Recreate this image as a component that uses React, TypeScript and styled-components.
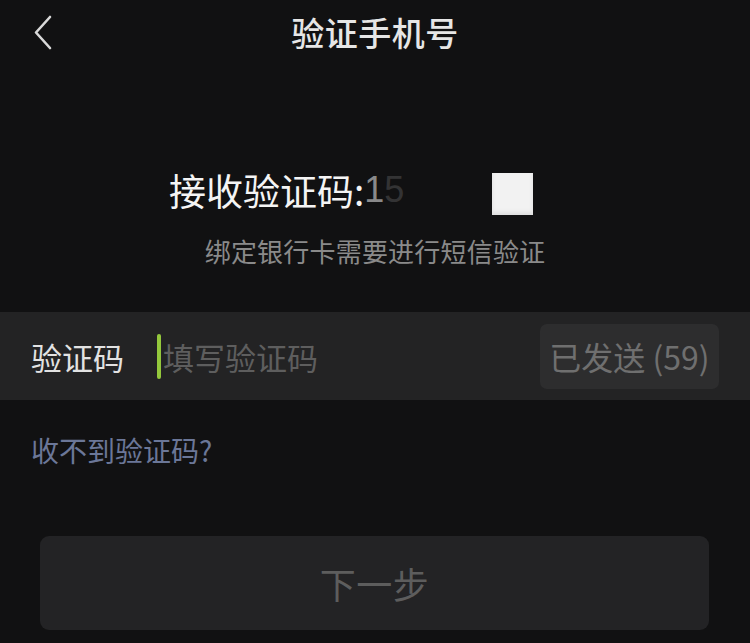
import styled, { createGlobalStyle } from 'styled-components';

const GlobalStyle = createGlobalStyle`
  html, body {
    margin: 0;
    padding: 0;
    background-color: #111112;
  }
  body {
    font-family: "Noto Sans CJK SC", "Noto Sans", "Liberation Sans", sans-serif;
    -webkit-font-smoothing: antialiased;
  }
  * {
    box-sizing: border-box;
  }
`;

const Page = styled.div`
  width: 750px;
  min-height: 643px;
  background-color: #111112;
  display: flex;
  flex-direction: column;
`;

const Header = styled.header`
  height: 64px;
  display: grid;
  grid-template-columns: 1fr auto 1fr;
  align-items: center;
`;

const BackButton = styled.button`
  justify-self: start;
  margin-left: 33px;
  padding: 0;
  border: none;
  background: none;
  display: flex;
  align-items: center;
  cursor: pointer;
`;

const Title = styled.h1`
  margin: 0;
  font-size: 33px;
  font-weight: 500;
  line-height: 64px;
  color: #e6e6e6;
  letter-spacing: 0.5px;
`;

const Info = styled.section`
  margin-top: 102px;
  display: flex;
  flex-direction: column;
`;

const ReceiveLine = styled.div`
  height: 48px;
  display: flex;
  align-items: center;
  padding-left: 169px;
`;

const ReceiveLabel = styled.span`
  font-size: 37px;
  line-height: 48px;
  color: #f4f4f4;
`;

const Phone = styled.span`
  width: 128px;
  font-family: "Liberation Sans", "Noto Sans", sans-serif;
  font-size: 36px;
  line-height: 48px;
  display: flex;
`;

const Digit = styled.span<{ $fade: number }>`
  color: #bdbdbd;
  opacity: ${(p) => p.$fade};
`;

const Redact = styled.span`
  width: 41px;
  height: 42px;
  margin-top: 8px;
  background: #f2f2f2;
  box-shadow: inset 0 -3px 4px rgba(0, 0, 0, 0.08);
`;

const Subtitle = styled.p`
  margin: 19px 0 0;
  text-align: center;
  font-size: 26px;
  line-height: 36px;
  color: #8a8a8a;
  letter-spacing: 0.2px;
`;

const CodeRow = styled.div`
  margin-top: 43px;
  height: 88px;
  background-color: #232324;
  display: flex;
  align-items: center;
  padding: 0 31px;
`;

const CodeLabel = styled.span`
  width: 126px;
  font-size: 31px;
  color: #e2e2e2;
`;

const InputWrap = styled.div`
  flex: 1;
  display: flex;
  align-items: center;
  gap: 2px;
`;

const Caret = styled.span`
  width: 4px;
  height: 45px;
  border-radius: 2px;
  background-color: #94c83c;
`;

const CodeInput = styled.input`
  flex: 1;
  min-width: 0;
  border: none;
  outline: none;
  background: transparent;
  font-family: inherit;
  font-size: 31px;
  color: #e2e2e2;
  padding: 0;

  &::placeholder {
    color: #5e5e5e;
  }
`;

const SentButton = styled.button`
  width: 179px;
  height: 65px;
  border: none;
  border-radius: 7px;
  background-color: #2d2d2e;
  color: #6f6f6f;
  font-family: inherit;
  font-size: 32px;
  padding: 0;
  white-space: nowrap;
`;

const HelpLink = styled.a`
  margin: 30px 0 0 31px;
  font-size: 28px;
  line-height: 40px;
  color: #6b7798;
  text-decoration: none;
  align-self: flex-start;
`;

const NextButton = styled.button`
  margin: 66px 41px 0 40px;
  height: 94px;
  border: none;
  border-radius: 9px;
  background-color: #232325;
  color: #5d5d5d;
  font-family: inherit;
  font-size: 36px;
  letter-spacing: 0.5px;
`;

function ChevronLeft() {
  return (
    <svg width="20" height="35" viewBox="0 0 20 35" fill="none">
      <polyline
        points="17,2 3,17.5 17,33"
        stroke="#d9d9d9"
        strokeWidth="2.6"
        strokeLinecap="round"
        strokeLinejoin="round"
      />
    </svg>
  );
}

export default function App() {
  return (
    <>
      <GlobalStyle />
      <Page>
        <Header>
          <BackButton aria-label="返回">
            <ChevronLeft />
          </BackButton>
          <Title>验证手机号</Title>
          <span />
        </Header>

        <Info>
          <ReceiveLine>
            <ReceiveLabel>接收验证码:</ReceiveLabel>
            <Phone>
              <Digit $fade={0.7}>1</Digit>
              <Digit $fade={0.2}>5</Digit>
            </Phone>
            <Redact />
          </ReceiveLine>
          <Subtitle>绑定银行卡需要进行短信验证</Subtitle>
        </Info>

        <CodeRow>
          <CodeLabel>验证码</CodeLabel>
          <InputWrap>
            <Caret />
            <CodeInput placeholder="填写验证码" />
          </InputWrap>
          <SentButton>已发送 (59)</SentButton>
        </CodeRow>

        <HelpLink href="#">收不到验证码?</HelpLink>

        <NextButton>下一步</NextButton>
      </Page>
    </>
  );
}
